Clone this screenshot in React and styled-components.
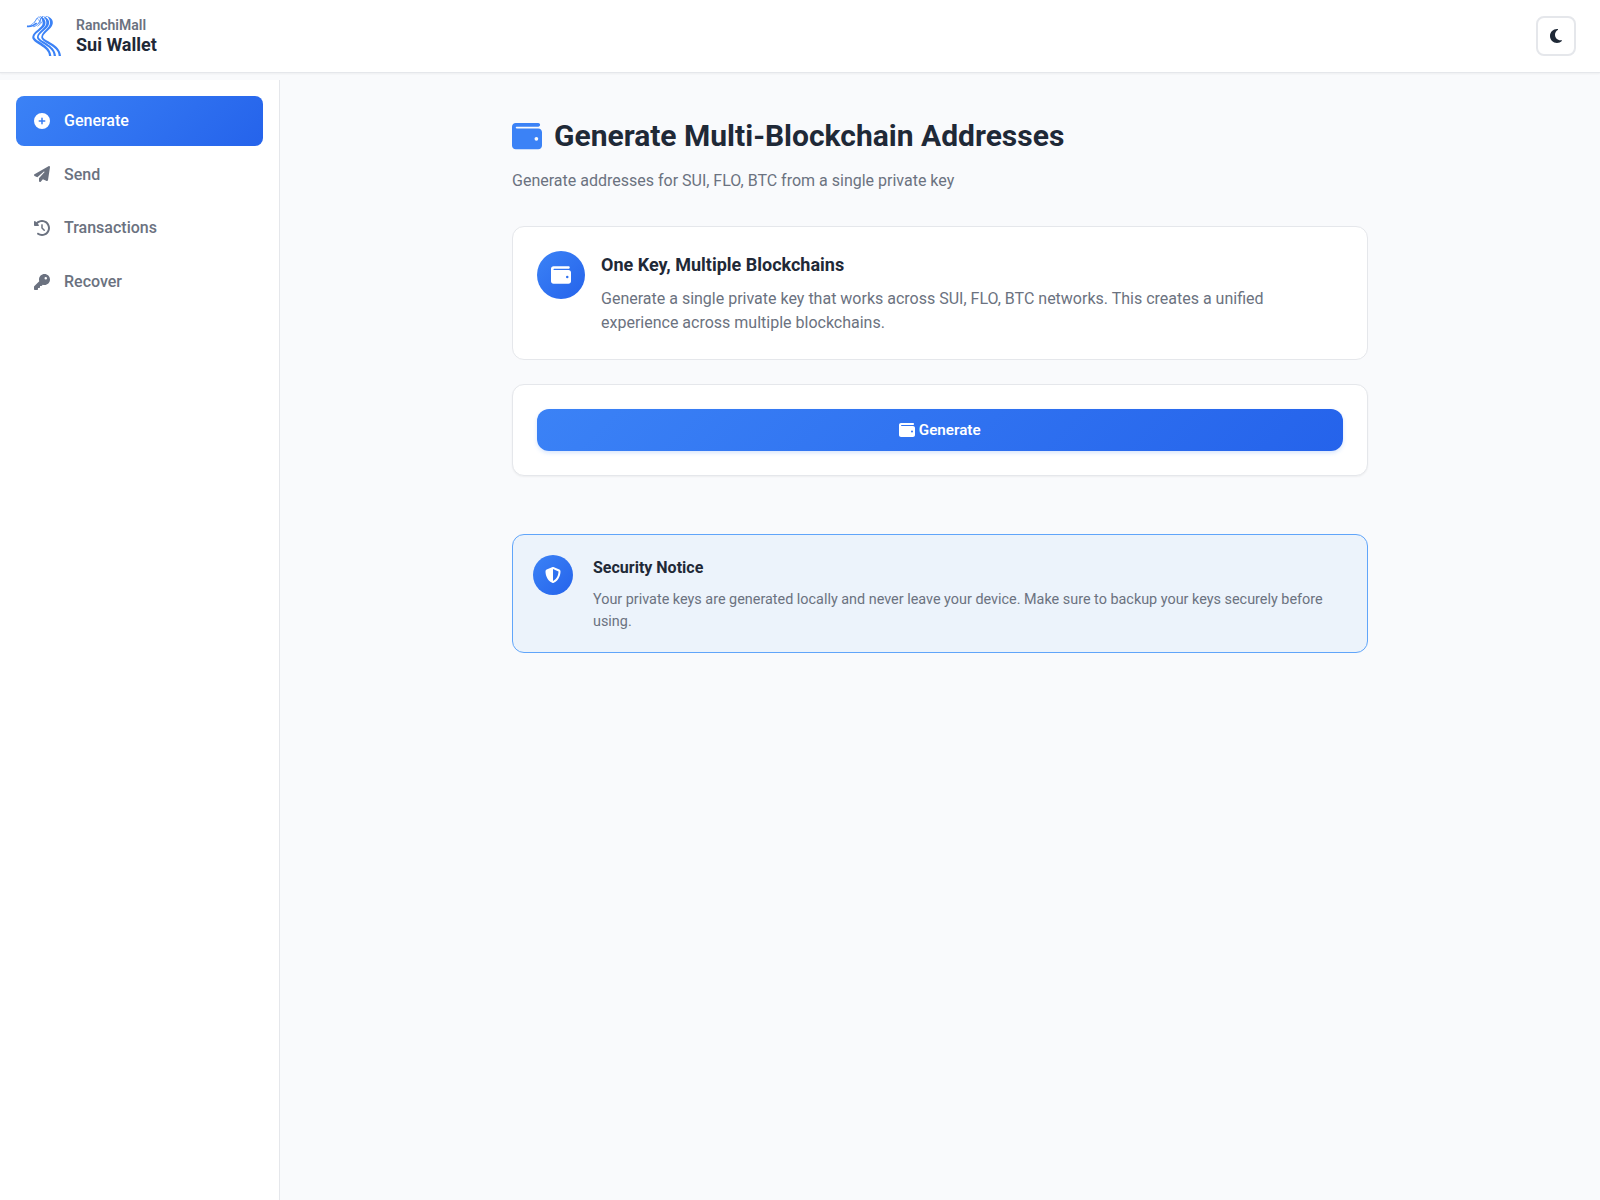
import React, { useState } from 'react'
import styled, { createGlobalStyle, ThemeProvider } from 'styled-components'
import {
  FaCirclePlus,
  FaClockRotateLeft,
  FaKey,
  FaMoon,
  FaPaperPlane,
  FaShieldHalved,
  FaWallet,
} from 'react-icons/fa6'

const theme = {
  colors: {
    primary: '#3b82f6',
    gradient: 'linear-gradient(135deg, #3b82f6 0%, #2563eb 100%)',
    text: '#1f2937',
    muted: '#6b7280',
    border: '#e5e7eb',
    bg: '#f9fafc',
    card: '#ffffff',
    notice: '#ecf3fb',
    noticeBorder: '#60a5fa',
  },
}

const GlobalStyle = createGlobalStyle`
  * {
    margin: 0;
    padding: 0;
    box-sizing: border-box;
  }
  body {
    font-family: Roboto, "Liberation Sans", sans-serif;
    font-size: 16px;
    line-height: 1.6;
    color: ${theme.colors.text};
    background: ${theme.colors.bg};
  }
  svg {
    display: block;
    flex-shrink: 0;
  }
`

const Page = styled.div`
  min-height: 1200px;
  display: flex;
  flex-direction: column;
`

const Header = styled.header`
  height: 73px;
  margin-bottom: 7px;
  padding: 0 24px;
  display: flex;
  align-items: center;
  justify-content: space-between;
  background: ${({ theme }) => theme.colors.card};
  border-bottom: 1px solid ${({ theme }) => theme.colors.border};
  box-shadow: 0 1px 2px rgba(0, 0, 0, 0.05);
`

const Brand = styled.div`
  display: flex;
  align-items: center;
  gap: 12px;
`

const BrandText = styled.div`
  display: flex;
  flex-direction: column;
`

const Company = styled.span`
  font-size: 14px;
  font-weight: 600;
  line-height: 17px;
  color: ${({ theme }) => theme.colors.muted};
`

const AppName = styled.span`
  font-size: 18px;
  font-weight: 700;
  line-height: 22px;
`

const ThemeButton = styled.button`
  width: 40px;
  height: 40px;
  display: flex;
  align-items: center;
  justify-content: center;
  color: ${({ theme }) => theme.colors.text};
  background: ${({ theme }) => theme.colors.card};
  border: 2px solid ${({ theme }) => theme.colors.border};
  border-radius: 8px;
  font-size: 16px;
  cursor: pointer;
`

const Body = styled.div`
  flex: 1;
  display: flex;
`

const Sidebar = styled.nav`
  width: 280px;
  padding: 16px;
  display: flex;
  flex-direction: column;
  gap: 4px;
  background: ${({ theme }) => theme.colors.card};
  border-right: 1px solid ${({ theme }) => theme.colors.border};
`

const NavItem = styled.button`
  height: 49.6px;
  padding: 12px 16px;
  display: flex;
  align-items: center;
  gap: 12px;
  font: inherit;
  font-weight: 500;
  color: ${({ theme, $active }) => ($active ? '#fff' : theme.colors.muted)};
  background: ${({ theme, $active }) => ($active ? theme.colors.gradient : 'transparent')};
  border: none;
  border-radius: 8px;
  cursor: pointer;
`

const NavIcon = styled.span`
  width: 20px;
  display: flex;
  justify-content: center;
`

const Main = styled.main`
  flex: 1;
  padding: 32px;
`

const Container = styled.div`
  width: 856px;
  margin: 0 auto;
`

const PageHeader = styled.div`
  margin-bottom: 32px;
`

const Title = styled.h2`
  display: flex;
  align-items: center;
  gap: 12px;
  font-size: 30px;
  font-weight: 700;
  line-height: 48px;
  margin-bottom: 8px;

  svg {
    color: ${({ theme }) => theme.colors.primary};
  }
`

const Subtitle = styled.p`
  color: ${({ theme }) => theme.colors.muted};
`

const Card = styled.section`
  padding: 24px;
  margin-bottom: 24px;
  display: flex;
  gap: 16px;
  background: ${({ theme }) => theme.colors.card};
  border: 1px solid ${({ theme }) => theme.colors.border};
  border-radius: 12px;
  box-shadow: ${({ $raised }) => ($raised ? '0 1px 2px rgba(0, 0, 0, 0.05)' : 'none')};
`

const RoundIcon = styled.div`
  width: ${({ $size }) => $size}px;
  height: ${({ $size }) => $size}px;
  flex-shrink: 0;
  display: flex;
  align-items: center;
  justify-content: center;
  color: #fff;
  background: ${({ theme }) => theme.colors.gradient};
  border-radius: 50%;
`

const CardTitle = styled.h3`
  font-size: 18px;
  font-weight: 700;
  line-height: 28px;
  margin-bottom: 8px;
`

const CardText = styled.p`
  line-height: 24px;
  color: ${({ theme }) => theme.colors.muted};
`

const GenerateButton = styled.button`
  flex: 1;
  height: 42px;
  display: flex;
  align-items: center;
  justify-content: center;
  gap: 3.5px;
  font-family: inherit;
  font-size: 15.2px;
  font-weight: 600;
  color: #fff;
  background: ${({ theme }) => theme.colors.gradient};
  border: none;
  border-radius: 12px;
  box-shadow: 0 2px 4px rgba(59, 130, 246, 0.2);
  cursor: pointer;
`

const Notice = styled.section`
  margin-top: 58px;
  padding: 20px 20px 19px;
  display: flex;
  gap: 20px;
  background: ${({ theme }) => theme.colors.notice};
  border: 1px solid ${({ theme }) => theme.colors.noticeBorder};
  border-radius: 12px;
`

const NoticeTitle = styled.h4`
  font-size: 16px;
  font-weight: 700;
  line-height: 25.6px;
  margin-bottom: 9px;
`

const NoticeText = styled.p`
  font-size: 14.4px;
  line-height: 22px;
  color: ${({ theme }) => theme.colors.muted};
`

const Logo = () => (
  <svg width="40" height="40" viewBox="24 24 120 120" fill="#3b82f6">
    <path d="M92 24C104 27 113 37 110 48C106 65 84 73 81 86C80 98 133 106 135 144L128 144C130 113 72 103 76 86C78 70 102 60 102 45C102 36 98 29 92 24Z" />
    <path d="M80 24C92 27 102 37 99 48C95 65 71 73 68 86C67 99 118 108 120 144L113 144C115 114 59 103 63 86C65 70 91 60 91 45C91 36 87 29 80 24Z" />
    <path d="M71 24C83 28 91 38 88 49C84 65 58 73 55 86C54 99 104 108 106 144L99 144C101 116 45 105 49 86C51 70 80 60 80 46C80 38 77 30 71 24Z" />
    <g fill="none" stroke="#3b82f6" strokeWidth="2">
      <path d="M34 54C42 57 46 48 52 46C57 43 61 29 69 26C76 31 75 42 69 50" />
      <path d="M33 55C44 57 53 53 62 45" strokeWidth="5" />
      <path d="M52 56C61 54 68 47 71 40C73 33 76 29 81 25" strokeWidth="3" />
      <path d="M64 55C74 50 77 42 83 34C86 29 89 26 93 25" />
      <path d="M54 45L64 30L73 44" strokeWidth="1.5" />
    </g>
  </svg>
)

const navItems = [
  { name: 'Generate', icon: FaCirclePlus },
  { name: 'Send', icon: FaPaperPlane },
  { name: 'Transactions', icon: FaClockRotateLeft },
  { name: 'Recover', icon: FaKey },
]

const App = () => {
  const [active, setActive] = useState('Generate')

  return (
    <ThemeProvider theme={theme}>
      <GlobalStyle />
      <Page>
        <Header>
          <Brand>
            <Logo />
            <BrandText>
              <Company>RanchiMall</Company>
              <AppName>Sui Wallet</AppName>
            </BrandText>
          </Brand>
          <ThemeButton aria-label="Toggle theme">
            <FaMoon />
          </ThemeButton>
        </Header>
        <Body>
          <Sidebar>
            {navItems.map(({ name, icon: Icon }) => (
              <NavItem key={name} $active={active === name} onClick={() => setActive(name)}>
                <NavIcon>
                  <Icon size={16} />
                </NavIcon>
                {name}
              </NavItem>
            ))}
          </Sidebar>
          <Main>
            <Container>
              <PageHeader>
                <Title>
                  <FaWallet />
                  Generate Multi-Blockchain Addresses
                </Title>
                <Subtitle>Generate addresses for SUI, FLO, BTC from a single private key</Subtitle>
              </PageHeader>
              <Card>
                <RoundIcon $size={48}>
                  <FaWallet size={20} />
                </RoundIcon>
                <div>
                  <CardTitle>One Key, Multiple Blockchains</CardTitle>
                  <CardText>
                    Generate a single private key that works across SUI, FLO, BTC networks. This creates a unified
                    experience across multiple blockchains.
                  </CardText>
                </div>
              </Card>
              <Card $raised>
                <GenerateButton>
                  <FaWallet size={16} />
                  Generate
                </GenerateButton>
              </Card>
              <Notice>
                <RoundIcon $size={40}>
                  <FaShieldHalved size={16} />
                </RoundIcon>
                <div>
                  <NoticeTitle>Security Notice</NoticeTitle>
                  <NoticeText>
                    Your private keys are generated locally and never leave your device. Make sure to backup your keys
                    securely before using.
                  </NoticeText>
                </div>
              </Notice>
            </Container>
          </Main>
        </Body>
      </Page>
    </ThemeProvider>
  )
}

export default App
